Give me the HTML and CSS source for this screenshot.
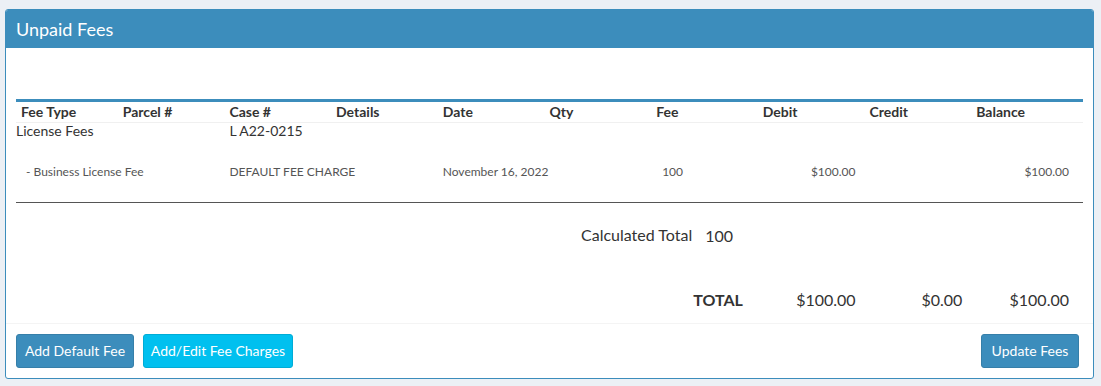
FILE: index.html
```html
<!DOCTYPE html>
<html lang="en">
<head>
<meta charset="utf-8">
<title>Unpaid Fees</title>
<link rel="stylesheet" href="styles.css">
</head>
<body>
<div class="box">
  <div class="box-header"><h3 class="box-title">Unpaid Fees</h3></div>
  <div class="box-body">
    <div class="spacer"></div>
    <table class="fees">
      <thead>
        <tr>
          <th class="first">Fee Type</th>
          <th>Parcel #</th>
          <th>Case #</th>
          <th>Details</th>
          <th>Date</th>
          <th>Qty</th>
          <th>Fee</th>
          <th>Debit</th>
          <th>Credit</th>
          <th>Balance</th>
        </tr>
      </thead>
      <tbody>
        <tr class="group">
          <td>License Fees</td>
          <td></td>
          <td>L A22-0215</td>
          <td></td><td></td><td></td><td></td><td></td><td></td><td></td>
        </tr>
        <tr class="item">
          <td class="indent">- Business License Fee</td>
          <td></td>
          <td>DEFAULT FEE CHARGE</td>
          <td></td>
          <td>November 16, 2022</td>
          <td></td>
          <td class="fee">100</td>
          <td class="num">$100.00</td>
          <td></td>
          <td class="num">$100.00</td>
        </tr>
      </tbody>
    </table>
    <div class="rule"></div>
    <div class="calc"><span class="calc-label">Calculated Total</span><span class="calc-value">100</span></div>
    <div class="totals">
      <span class="total-label">TOTAL</span>
      <span class="total-num">$100.00</span>
      <span class="total-num">$0.00</span>
      <span class="total-num">$100.00</span>
    </div>
  </div>
  <div class="box-footer">
    <button class="btn btn-primary w-default">Add Default Fee</button>
    <button class="btn btn-info w-edit">Add/Edit Fee Charges</button>
    <span class="grow"></span>
    <button class="btn btn-primary w-update">Update Fees</button>
  </div>
</div>
</body>
</html>
```

FILE: styles.css
```css
html, body {
  margin: 0;
  padding: 0;
  background: #ecf0f5;
}
body {
  padding: 9px 7px 7px 5px;
  font-family: "Lato", "Liberation Sans", sans-serif;
  font-size: 14px;
  color: #333;
}
.box {
  background: #fff;
  border: 1px solid #3c8dbc;
  border-radius: 3px;
}
.box-header {
  background: #3c8dbc;
  padding: 0 10px;
  height: 38px;
  border-radius: 2px 2px 0 0;
}
.box-title {
  margin: 0;
  font-size: 18px;
  font-weight: 400;
  line-height: 38px;
  color: #fff;
}
.box-body {
  padding: 10px 10px 12px;
}
.spacer {
  height: 41px;
}
.fees {
  width: 100%;
  table-layout: fixed;
  border-collapse: collapse;
  border-top: 3px solid #3c8dbc;
}
.fees th {
  text-align: left;
  font-weight: 700;
  font-size: 14px;
  line-height: 20px;
  padding: 0;
  color: #333;
  border-bottom: 1px solid #f0f0f0;
}
.fees th.first {
  padding-left: 5px;
}
.fees td {
  padding: 0;
  white-space: nowrap;
}
.group td {
  font-size: 14px;
  line-height: 16px;
  color: #333;
}
.item td {
  font-size: 12px;
  line-height: 18px;
  color: #555;
  padding-top: 24px;
  padding-bottom: 21px;
}
.item td.indent {
  padding-left: 10px;
}
.item td.fee {
  padding-left: 6px;
}
.item td.num {
  text-align: right;
  padding-right: 14px;
}
.rule {
  border-top: 1px solid #555;
}
.calc {
  display: flex;
  align-items: baseline;
  gap: 13px;
  padding-left: 565px;
  margin-top: 21px;
  font-size: 16px;
  line-height: 22px;
}
.calc-value {
  position: relative;
  top: 1px;
}
.totals {
  display: grid;
  grid-template-columns: 6fr 1fr 1fr 1fr 1fr;
  margin-top: 43px;
  font-size: 16px;
  line-height: 22px;
}
.totals span {
  text-align: right;
  padding-right: 14px;
}
.total-label {
  font-weight: 700;
  padding-right: 20px !important;
  grid-column: 1 / 3;
}
.box-footer {
  display: flex;
  align-items: center;
  gap: 9px;
  border-top: 1px solid #f4f4f4;
  padding: 10px 14px 10px 10px;
}
.grow {
  flex: 1;
}
.btn {
  font-family: inherit;
  font-size: 14px;
  line-height: 20px;
  padding: 6px 0;
  height: 34px;
  border-radius: 3px;
  border: 1px solid transparent;
  color: #fff;
  text-align: center;
}
.btn-primary {
  background: #3c8dbc;
  border-color: #367fa9;
}
.btn-info {
  background: #00c0ef;
  border-color: #00acd6;
}
.w-default { width: 118px; }
.w-edit { width: 150px; }
.w-update { width: 98px; }
```
